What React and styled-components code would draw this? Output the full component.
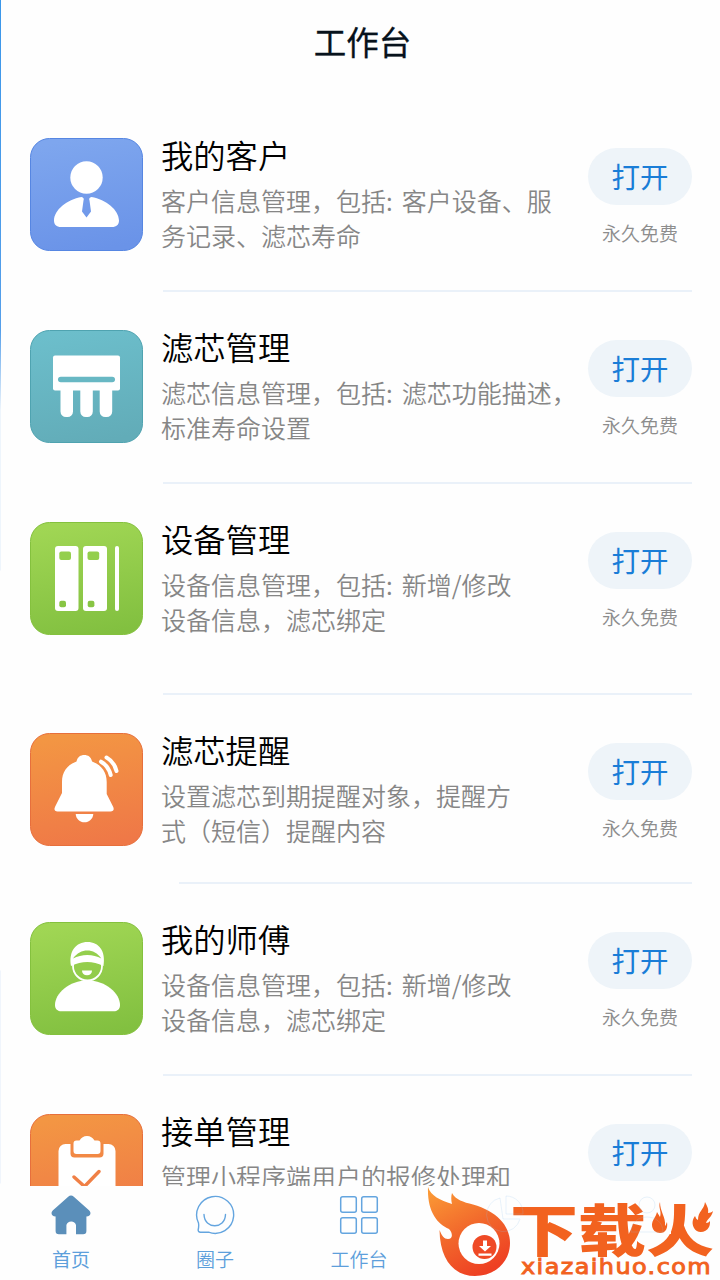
import React from "react";

//styled components
import styled, { createGlobalStyle } from "styled-components";

const apps = [
    {
        title: "我的客户",
        lines: ["客户信息管理，包括: 客户设备、服", "务记录、滤芯寿命"],
        icon: "customer",
        tone: "blue",
        height: 192,
    },
    {
        title: "滤芯管理",
        lines: ["滤芯信息管理，包括: 滤芯功能描述，", "标准寿命设置"],
        icon: "filter",
        tone: "teal",
        height: 192,
    },
    {
        title: "设备管理",
        lines: ["设备信息管理，包括: 新增/修改", "设备信息，滤芯绑定"],
        icon: "device",
        tone: "green",
        height: 211,
    },
    {
        title: "滤芯提醒",
        lines: ["设置滤芯到期提醒对象，提醒方", "式（短信）提醒内容"],
        icon: "bell",
        tone: "orange",
        height: 189,
        inset: 16,
    },
    {
        title: "我的师傅",
        lines: ["设备信息管理，包括: 新增/修改", "设备信息，滤芯绑定"],
        icon: "master",
        tone: "green",
        height: 192,
    },
    {
        title: "接单管理",
        lines: ["管理小程序端用户的报修处理和"],
        icon: "order",
        tone: "orange",
        height: 192,
    },
];

const tones = {
    blue: { from: "#7ea6ee", to: "#6a93e8", edge: "#5686e2" },
    teal: { from: "#6cbecb", to: "#62acb8", edge: "#4fa3b0" },
    green: { from: "#a0d654", to: "#82c040", edge: "#84c13e" },
    orange: { from: "#f39643", to: "#ef7847", edge: "#e76f3c" },
};

const glyphs = {
    customer: (
        <>
            <circle cx="56.5" cy="39.500" r="16.200" fill="#fff" />
            <path
                fill="#fff"
                d="M51.500 59C37 61.500 24 72 24 82.500c0 4.200 2.500 6.500 7 6.500h51c4.500 0 7-2.300 7-6.500C89 72 76 61.500 61.500 59c-2 .5-2.800 1.800-2 3.500l1.500 11-4.500 6-4.500-6 1.500-11c.8-1.700 0-3-2-3.500z"
            />
        </>
    ),
    filter: (
        <>
            <rect x="23" y="25.500" width="67" height="35" rx="2" fill="#fff" />
            <rect x="28" y="46.700" width="57" height="5.600" rx="2.800" fill="#68b8c4" />
            <path
                fill="#fff"
                d="M30.500 60h12.500v21.500a5.500 5.500 0 0 1-5.500 5.500h-1.500a5.500 5.500 0 0 1-5.500-5.500zM50.300 60h12.500v21.500a5.500 5.500 0 0 1-5.500 5.500h-1.500a5.500 5.500 0 0 1-5.500-5.500zM69.700 60h12.500v21.500a5.500 5.500 0 0 1-5.500 5.500h-1.500a5.500 5.500 0 0 1-5.500-5.500z"
            />
        </>
    ),
    device: (
        <>
            <rect x="25" y="24" width="23.500" height="65" rx="3" fill="#fff" />
            <rect x="53" y="24" width="24" height="65" rx="3" fill="#fff" />
            <rect x="85" y="24" width="4" height="65" rx="2" fill="#fff" />
            <rect x="29.300" y="29.500" width="11.700" height="8.500" rx="2" fill="#94cf4d" />
            <rect x="57.500" y="29.500" width="11.700" height="8.500" rx="2" fill="#94cf4d" />
            <rect x="29.300" y="78.700" width="6.700" height="6.500" rx="2" fill="#88c544" />
            <rect x="57.700" y="78.700" width="6.700" height="6.500" rx="2" fill="#88c544" />
        </>
    ),
    bell: (
        <>
            <path
                fill="#fff"
                d="M46.500 28.500C47.500 24 50.500 22 54.300 22s6.800 2 7.800 6.500C71.500 32 76.700 39 76.700 49v12l6.300 12.500c1.500 3 .5 5-2.500 5H27.500c-3 0-3.800-2-2.300-5L32 60V49c0-10 5-17 14.500-20.500z"
            />
            <path fill="#fff" d="M45.700 81h17.600c-.3 5-4.300 8.300-8.800 8.300s-8.500-3.300-8.800-8.300z" />
            <path
                fill="none"
                stroke="#fff"
                strokeWidth="4"
                strokeLinecap="round"
                d="M71 28.700Q78.500 33 80.700 42M76.500 24.500Q84.500 29 86.500 38"
            />
        </>
    ),
    master: (
        <>
            <circle cx="57.500" cy="44" r="14.500" fill="none" stroke="#fff" strokeWidth="1.800" />
            <path
                fill="#fff"
                d="M41 44C38.500 29 46 20 57.500 20S76 29 73.500 44C62.500 38.500 52 38.500 41 44z"
            />
            <path
                fill="#94cf4d"
                d="M43 36.500c4-5.500 9-8 14.300-8s10.300 2.500 14 8c-4-2-9-3.500-14-3.500s-10 1.300-14.300 3.500z"
            />
            <path fill="#fff" d="M52 48.500h10c0 3-2 4.800-5 4.800s-5-1.800-5-4.800z" />
            <path
                fill="#fff"
                d="M57.500 58.500C39 58.500 25 71.500 25 83c0 4 2.500 6.300 6.500 6.300h52c4 0 6.500-2.300 6.500-6.300 0-11.500-14-24.500-32.500-24.500z"
            />
        </>
    ),
    order: (
        <>
            <rect x="28.500" y="30" width="57" height="60" rx="7" fill="#fff" />
            <path fill="#f28945" d="M40.500 29h33v10.500a4 4 0 0 1-4 4h-25a4 4 0 0 1-4-4z" />
            <path
                fill="#fff"
                d="M46.500 26.500h3c2-3 4-4.500 7.500-4.500s5.500 1.500 7.500 4.500h3q3 0 3 3V37q0 3-3 3h-21q-3 0-3-3v-7.500q0-3 3-3z"
            />
            <path
                fill="none"
                stroke="#f08046"
                strokeWidth="3.400"
                strokeLinecap="round"
                d="M44 63l10.500 9.500 14.500-15"
            />
        </>
    ),
};

const AppIcon = ({ name, tone }) => {
    const { from, to, edge } = tones[tone];
    return (
        <StyledIcon viewBox="0 0 113 113">
            <defs>
                <linearGradient id={`tile-${name}`} x1="0.400" y1="0" x2="0.600" y2="1">
                    <stop offset="0" stopColor={from} />
                    <stop offset="1" stopColor={to} />
                </linearGradient>
            </defs>
            <rect
                x="0.500"
                y="0.500"
                width="112"
                height="112"
                rx="19"
                fill={`url(#tile-${name})`}
                stroke={edge}
            />
            {glyphs[name]}
        </StyledIcon>
    );
};

const AppRow = ({ app }) => {
    return (
        <StyledRow $height={app.height}>
            <AppIcon name={app.icon} tone={app.tone} />
            <StyledInfo>
                <h2>{app.title}</h2>
                {app.lines.map((line) => (
                    <p key={line}>{line}</p>
                ))}
                <StyledDivider $inset={app.inset || 0} />
            </StyledInfo>
            <StyledAction>
                <StyledOpenBtn>打开</StyledOpenBtn>
                <span>永久免费</span>
            </StyledAction>
        </StyledRow>
    );
};

const Brand = () => {
    return (
        <StyledBrand viewBox="0 0 300 94">
            <defs>
                <linearGradient id="flame" x1="0.100" y1="0" x2="0.600" y2="1">
                    <stop offset="0" stopColor="#fb9a35" />
                    <stop offset="0.500" stopColor="#f26a2c" />
                    <stop offset="1" stopColor="#ee4023" />
                </linearGradient>
            </defs>
            <path
                fill="url(#flame)"
                d="M8 1C11 10 20 14 32 18C31 14 31 10 32 7C36 14 43 16 53 18.500C76 25 90 39 90 57C90 76 75 90 55 90C35 90 20 75 19.500 44C22 50 24 53 28 53C33 53 33 47 29 43C17 38 7 25 8 1z"
            />
            <circle cx="59" cy="57.500" r="20.500" fill="#fff" />
            <circle cx="64.500" cy="61" r="12" fill="#ef4a26" />
            <path fill="#fff" d="M63 54.500h4V60h4l-6 5.500-6-5.500h4zM58.500 67.500h13v2.200h-13z" />
            <text x="90" y="65" fontSize="56" fontWeight="900" textLength="204" lengthAdjust="spacingAndGlyphs">
                下载火
            </text>
            {/* small flames in place of the two side strokes */}
            <path fill="#fefefe" d="M228 12h23v36h-23zM269 12h25v36h-17l-8-3z" />
            <path
                fill="#f2621f"
                d="M240 16c-2 6 2 9 0 15-1-2-2-3-3-5-1 5-5 8-5 13 0 5 4 8 8 8 6 0 8-5 7-11-1 2-1 3-2 4 1-9-5-14-5-24zM285 16c-1 8-7 9-7 18-2-1-2-2-3-4-3 4-3 8-1 12 3 6 12 5 15-1 1-2 1-4 1-6-1 1-2 2-4 2 1-4 6-6 7-12-1 1-3 2-5 2 1-4-1-7-3-11z"
            />
            <text
                x="101"
                y="88"
                fontSize="20.500"
                letterSpacing="1.200"
                textLength="191"
                lengthAdjust="spacingAndGlyphs"
                className="url"
            >
                xiazaihuo.com
            </text>
            <g fill="none" stroke="#8fc3ee" strokeWidth="1" opacity="0.200">
                <path d="M80 12A17 17 0 1 0 100 33H83zM86 10v18h17a17 17 0 0 0-17-18z" />
                <circle cx="227" cy="19" r="8" />
                <path d="M211 46c0-20 32-20 32 0z" />
            </g>
        </StyledBrand>
    );
};

const App = () => {
    return (
        <StyledPage>
            <GlobalStyle />
            <StyledHeader>工作台</StyledHeader>
            <StyledList>
                {apps.map((app) => (
                    <AppRow key={app.title} app={app} />
                ))}
            </StyledList>
            <StyledNav>
                <StyledTab $active>
                    <svg viewBox="0 0 40 40">
                        <path
                            fill="#5b8fba"
                            d="M17.200 1.700q2.800-2.300 5.600 0L38 15.300c2.800 2.700 1.400 6.200-2.600 6.200V36q0 3.300-3.300 3.300H25V30a5 5 0 0 0-9.600 0v9.300H7.900q-3.300 0-3.300-3.300V21.500c-4 0-5.400-3.500-2.600-6.200z"
                        />
                    </svg>
                    首页
                </StyledTab>
                <StyledTab>
                    <svg viewBox="1 0 40 40" fill="none" stroke="#64a5df" strokeWidth="1.400">
                        <path d="M4.500 28A18.500 18.500 0 1 1 14.500 37.200H6.500Q3.900 37.200 4.200 34.600Q5 31 4.500 28z" />
                        <path d="M10 19.500c.5 15 21 15 21.500 0" strokeLinecap="round" />
                    </svg>
                    圈子
                </StyledTab>
                <StyledTab>
                    <svg viewBox="0 0 40 40" fill="none" stroke="#64a5df" strokeWidth="1.500">
                        <rect x="1.700" y="1.700" width="15.600" height="15.600" rx="2" />
                        <rect x="22.700" y="1.700" width="15.600" height="15.600" rx="2" />
                        <rect x="1.700" y="22.700" width="15.600" height="15.600" rx="2" />
                        <rect x="22.700" y="22.700" width="15.600" height="15.600" rx="2" />
                    </svg>
                    工作台
                </StyledTab>
                <Brand />
            </StyledNav>
        </StyledPage>
    );
};

const GlobalStyle = createGlobalStyle`
    * {
        box-sizing: border-box;
        margin: 0;
        padding: 0;
    }
    body {
        background: #fefefe;
        font-family: "Noto Sans CJK SC", "Noto Sans", sans-serif;
        font-weight: 350;
    }
`;

const StyledPage = styled.div`
    display: flex;
    flex-direction: column;
    width: 720px;
    height: 1280px;
    overflow: hidden;
    background: linear-gradient(
            #3b97ea 0,
            #559fea 330px,
            #eef5fc 410px,
            #eef5fc 570px,
            #fefefe 571px,
            #fefefe 970px,
            #f0f5fc 971px,
            #f0f5fc 1183px,
            #fefefe 1184px
        )
        left top / 1px 100% no-repeat #fefefe;
`;

const StyledHeader = styled.header`
    flex: none;
    height: 100px;
    padding-left: 5px;
    text-align: center;
    font-size: 32.500px;
    line-height: 82px;
    font-weight: 400;
    color: #07121c;
    -webkit-text-stroke: 0.300px #07121c;
`;

const StyledList = styled.main`
    flex: 1;
    min-height: 0;
    overflow: hidden;
`;

const StyledRow = styled.section`
    display: flex;
    height: ${(props) => props.$height}px;
    padding: 38px 28px 0 30px;
`;

const StyledIcon = styled.svg`
    flex: none;
    width: 113px;
    height: 113px;
`;

const StyledInfo = styled.div`
    flex: 1;
    display: flex;
    flex-direction: column;
    min-width: 0;
    margin-left: 18px;
    white-space: nowrap;

    h2 {
        font-size: 32.300px;
        font-weight: 350;
        line-height: 32px;
        margin-bottom: 13px;
        color: #000;
    }

    p {
        font-size: 25px;
        line-height: 35px;
        word-spacing: 3.500px;
        color: #868686;
    }
`;

const StyledDivider = styled.div`
    flex: none;
    width: 529px;
    height: 2px;
    margin: auto 0 0 2px;
    padding: 0;
    background: #eaf1f9;
    background-clip: content-box;
    padding-left: ${(props) => props.$inset}px;
`;

const StyledAction = styled.div`
    flex: none;
    display: flex;
    flex-direction: column;
    align-items: center;
    width: 104px;
    padding-top: 10px;

    span {
        margin-top: 14px;
        font-size: 19px;
        line-height: 28px;
        color: #8d8d8d;
    }
`;

const StyledOpenBtn = styled.button`
    width: 104px;
    height: 57px;
    padding-bottom: 2px;
    border: none;
    border-radius: 29px;
    background: #eef4f9;
    color: #1a7dd7;
    font-family: inherit;
    font-size: 28.500px;
    font-weight: 400;
    line-height: 55px;
`;

const StyledNav = styled.nav`
    flex: none;
    display: flex;
    height: 94px;
    background: #fefefe;
`;

const StyledTab = styled.div`
    display: flex;
    flex-direction: column;
    align-items: center;
    width: 144px;
    padding: 9px 2px 0 0;
    font-size: 19px;
    line-height: 28px;
    font-weight: ${(props) => (props.$active ? 400 : 350)};
    color: #5d9fdb;

    svg {
        width: 40px;
        height: 40px;
        margin-bottom: 10px;
    }
`;

const StyledBrand = styled.svg`
    flex: none;
    width: 300px;
    height: 94px;
    margin-left: -12px;

    text {
        fill: #f2621f;
        font-family: "Noto Sans CJK SC", sans-serif;
    }

    .url {
        font-family: "DejaVu Sans", sans-serif;
        font-weight: 400;
        stroke: #f2621f;
        stroke-width: 0.900;
    }
`;

export default App;
